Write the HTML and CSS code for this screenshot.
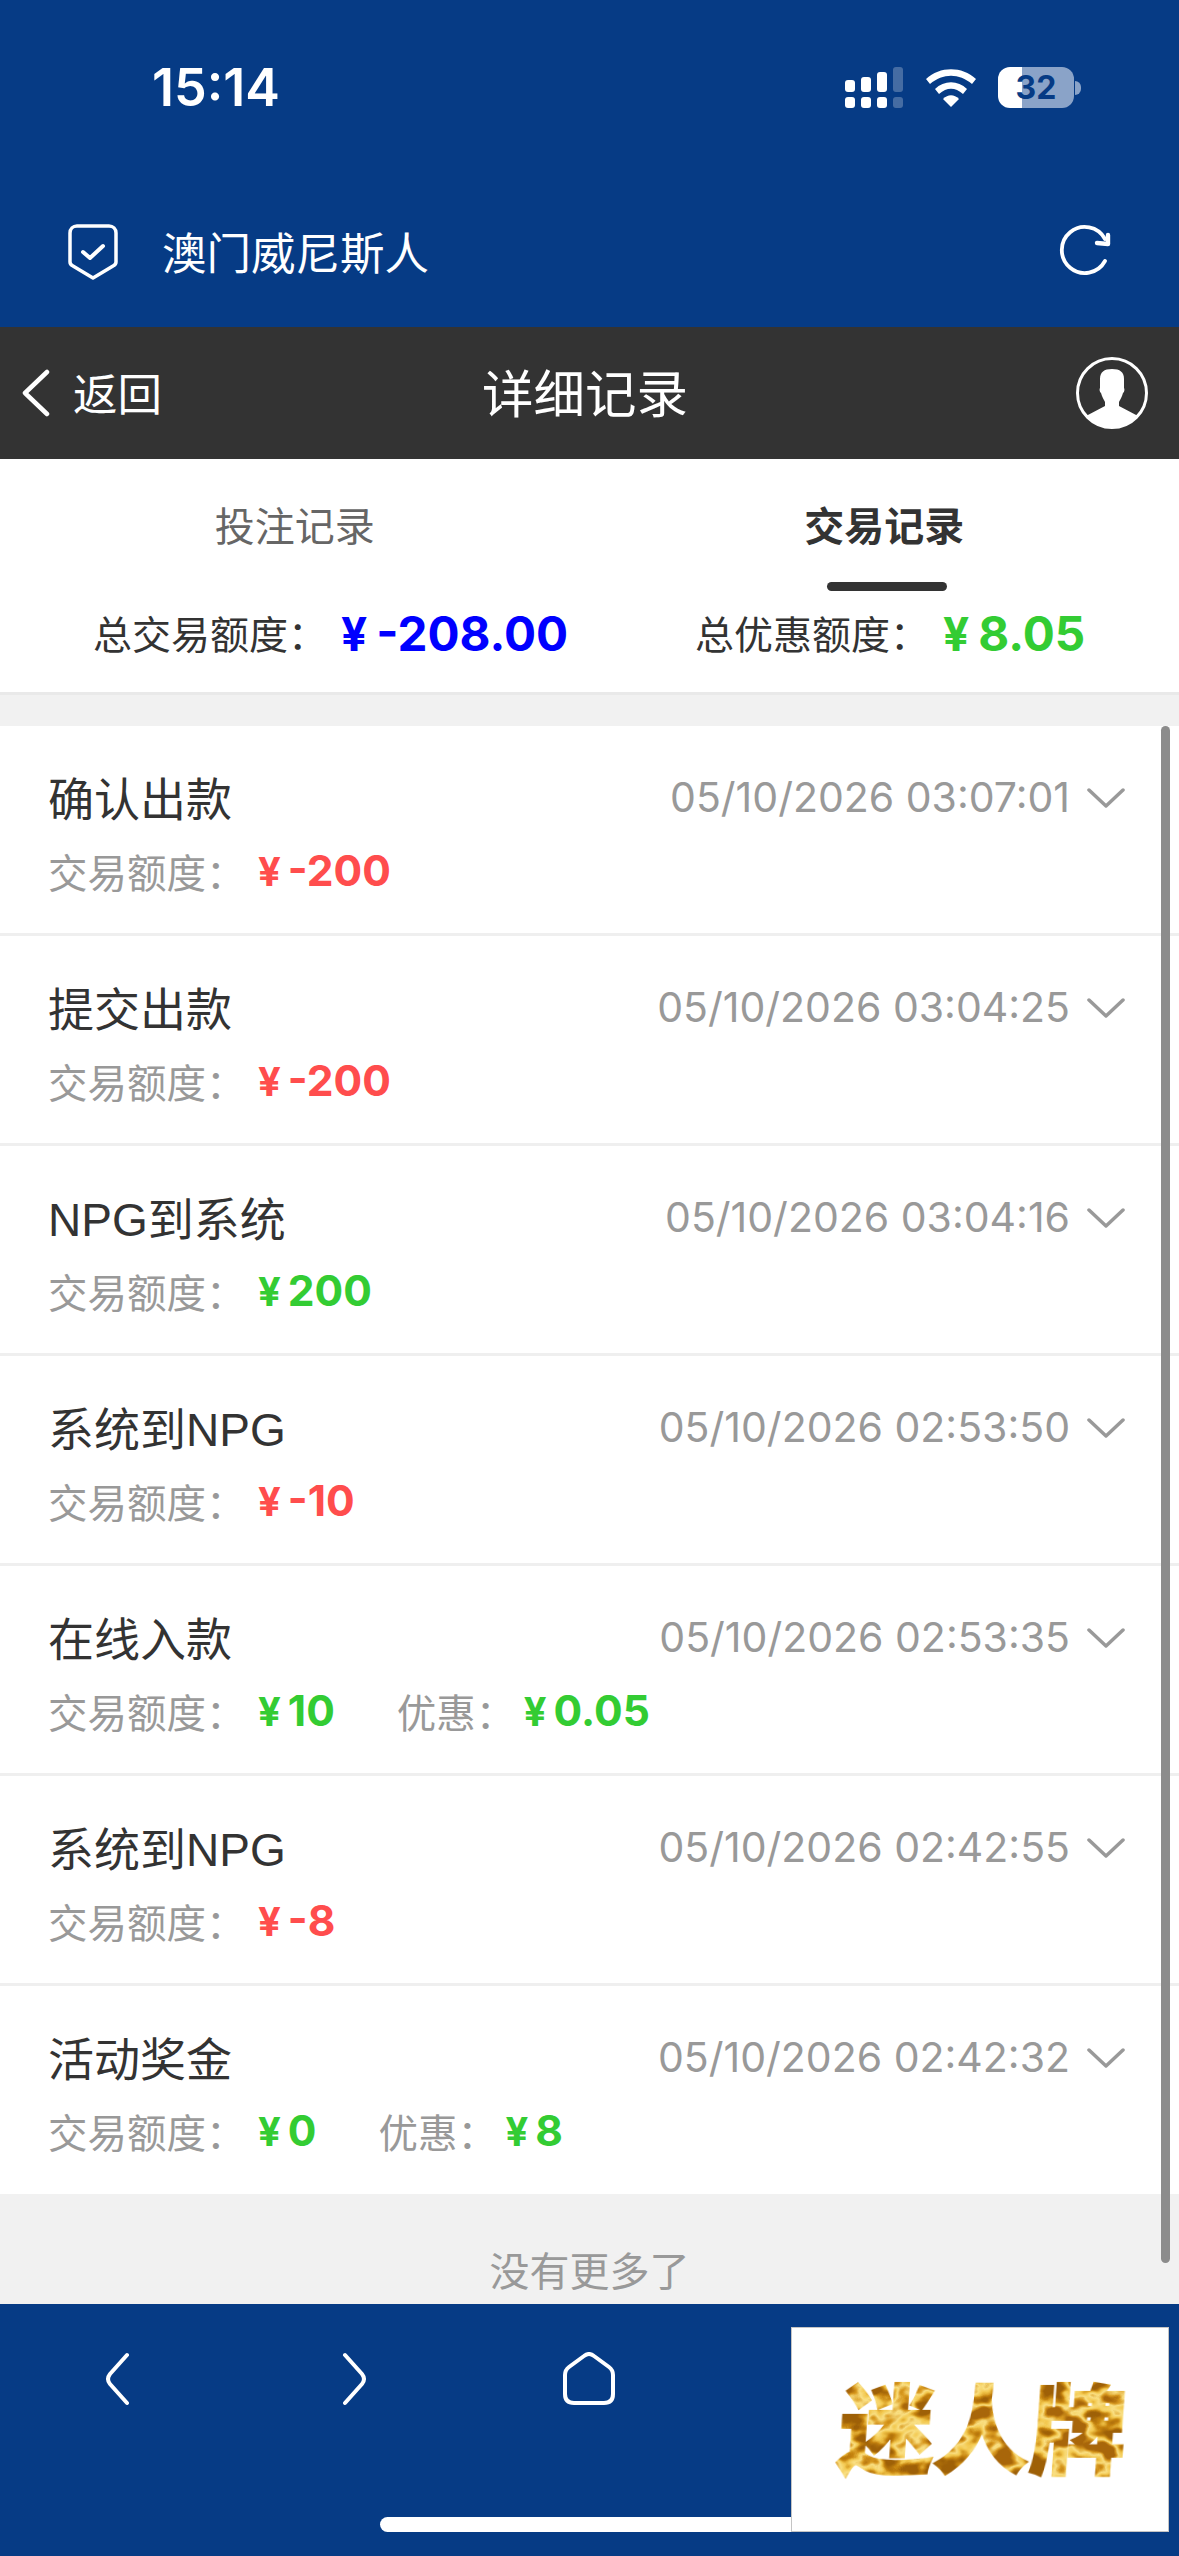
FILE: index.html
```html
<!DOCTYPE html>
<html lang="zh-CN">
<head>
    <meta charset="UTF-8">
    <title>详细记录</title>
    <link rel="stylesheet" href="styles.css">
</head>
<body>
<div class="page">

    <header class="top">
        <div class="status">
            <span class="time">15:14</span>
            <div class="status-icons">
                <svg class="signal" width="58" height="41" viewBox="0 0 58 41">
                    <g fill="#fff">
                        <rect x="0" y="13" width="10" height="12" rx="3"/>
                        <rect x="16" y="10" width="10" height="15" rx="3"/>
                        <rect x="32" y="5" width="10" height="20" rx="3"/>
                        <rect x="0" y="30" width="10" height="11" rx="3"/>
                        <rect x="16" y="30" width="10" height="11" rx="3"/>
                        <rect x="32" y="30" width="10" height="11" rx="3"/>
                        <g opacity="0.25">
                            <rect x="48" y="0" width="10" height="25" rx="3"/>
                            <rect x="48" y="30" width="10" height="11" rx="3"/>
                        </g>
                    </g>
                </svg>
                <svg class="wifi" width="50" height="38" viewBox="0 0 50 38">
                    <path d="M0 10 C14 -3 36 -3 50 10 L46 15 C33 4 17 4 4 15 Z" fill="#fff"/>
                    <path d="M9 20 C18 11 32 11 41 20 L37 25 C29 18 21 18 13 25 Z" fill="#fff"/>
                    <path d="M17 30 C22 25 28 25 33 30 L25 38 Z" fill="#fff"/>
                </svg>
                <div class="battery">
                    <span class="battery-num">32</span>
                </div>
                <span class="battery-tip"></span>
            </div>
        </div>
        <div class="app-row">
            <div class="app-name">
                <svg width="50" height="56" viewBox="0 0 50 56" fill="none" stroke="#fff" stroke-width="3.5" stroke-linejoin="round" stroke-linecap="round">
                    <path d="M9 2 H41 C45 2 48 5 48 9 V38 C48 40 47 41 45 42 L25 54 L5 42 C3 41 2 40 2 38 V9 C2 5 5 2 9 2 Z"/>
                    <path d="M15 28 L22 34 L35 22" stroke-width="4"/>
                </svg>
                <span class="app-title">澳门威尼斯人</span>
            </div>
            <svg class="refresh" width="56" height="56" viewBox="0 0 56 56" fill="none" stroke="#fff" stroke-width="3.8" stroke-linecap="round" stroke-linejoin="round">
                <path d="M49 36 A23 23 0 1 1 49 14"/>
                <path d="M52 10 L52 19 L41 18" stroke-width="4.4"/>
            </svg>
        </div>
    </header>

    <nav class="nav">
        <div class="nav-back">
            <svg width="28" height="48" viewBox="0 0 28 48" fill="none" stroke="#fff" stroke-width="4.5" stroke-linecap="round" stroke-linejoin="round">
                <path d="M25 3 L3 24 L25 45"/>
            </svg>
            <span>返回</span>
        </div>
        <div class="nav-title">详细记录</div>
        <svg class="nav-user" width="72" height="72" viewBox="0 0 72 72">
            <circle cx="36" cy="36" r="34.5" fill="none" stroke="#fff" stroke-width="3"/>
            <clipPath id="clip"><circle cx="36" cy="36" r="35"/></clipPath>
            <path clip-path="url(#clip)" fill="#fff" d="M36 12 C44 12 48 15 48 22 L48 31 C49 33 48 35 47 36 C46 40 44 43 43 45 L43 49 L62 59 L62 72 H10 L10 59 L29 49 L29 45 C28 43 26 40 25 36 C24 35 23 33 24 31 L24 22 C24 15 28 12 36 12 Z"/>
        </svg>
    </nav>

    <section class="summary">
        <div class="tabs">
            <div class="tab">投注记录</div>
            <div class="tab tab-active">交易记录</div>
        </div>
        <div class="totals">
            <div class="total total-left">
                <span class="total-label">总交易额度：</span>
                <span class="total-num blue"><i>¥</i>-208.00</span>
            </div>
            <div class="total total-right">
                <span class="total-label">总优惠额度：</span>
                <span class="total-num green"><i>¥</i>8.05</span>
            </div>
        </div>
    </section>

    <main class="list">
        <div class="row">
            <div class="row-top">
                <span class="row-title">确认出款</span>
                <span class="row-date">05/10/2026 03:07:01</span>
                <svg class="chev" width="38" height="20" viewBox="0 0 38 20"><path d="M2 2 L19 18 L36 2"/></svg>
            </div>
            <div class="row-sub">
                <span class="sub-label">交易额度：</span><span class="sub-num red"><i>¥</i>-200</span>
            </div>
        </div>
        <div class="row">
            <div class="row-top">
                <span class="row-title">提交出款</span>
                <span class="row-date">05/10/2026 03:04:25</span>
                <svg class="chev" width="38" height="20" viewBox="0 0 38 20"><path d="M2 2 L19 18 L36 2"/></svg>
            </div>
            <div class="row-sub">
                <span class="sub-label">交易额度：</span><span class="sub-num red"><i>¥</i>-200</span>
            </div>
        </div>
        <div class="row">
            <div class="row-top">
                <span class="row-title">NPG到系统</span>
                <span class="row-date">05/10/2026 03:04:16</span>
                <svg class="chev" width="38" height="20" viewBox="0 0 38 20"><path d="M2 2 L19 18 L36 2"/></svg>
            </div>
            <div class="row-sub">
                <span class="sub-label">交易额度：</span><span class="sub-num green"><i>¥</i>200</span>
            </div>
        </div>
        <div class="row">
            <div class="row-top">
                <span class="row-title">系统到NPG</span>
                <span class="row-date">05/10/2026 02:53:50</span>
                <svg class="chev" width="38" height="20" viewBox="0 0 38 20"><path d="M2 2 L19 18 L36 2"/></svg>
            </div>
            <div class="row-sub">
                <span class="sub-label">交易额度：</span><span class="sub-num red"><i>¥</i>-10</span>
            </div>
        </div>
        <div class="row">
            <div class="row-top">
                <span class="row-title">在线入款</span>
                <span class="row-date">05/10/2026 02:53:35</span>
                <svg class="chev" width="38" height="20" viewBox="0 0 38 20"><path d="M2 2 L19 18 L36 2"/></svg>
            </div>
            <div class="row-sub">
                <span class="sub-label">交易额度：</span><span class="sub-num green"><i>¥</i>10</span>
                <span class="sub-label sub-gap">优惠：</span><span class="sub-num green"><i>¥</i>0.05</span>
            </div>
        </div>
        <div class="row">
            <div class="row-top">
                <span class="row-title">系统到NPG</span>
                <span class="row-date">05/10/2026 02:42:55</span>
                <svg class="chev" width="38" height="20" viewBox="0 0 38 20"><path d="M2 2 L19 18 L36 2"/></svg>
            </div>
            <div class="row-sub">
                <span class="sub-label">交易额度：</span><span class="sub-num red"><i>¥</i>-8</span>
            </div>
        </div>
        <div class="row row-last">
            <div class="row-top">
                <span class="row-title">活动奖金</span>
                <span class="row-date">05/10/2026 02:42:32</span>
                <svg class="chev" width="38" height="20" viewBox="0 0 38 20"><path d="M2 2 L19 18 L36 2"/></svg>
            </div>
            <div class="row-sub">
                <span class="sub-label">交易额度：</span><span class="sub-num green"><i>¥</i>0</span>
                <span class="sub-label sub-gap">优惠：</span><span class="sub-num green"><i>¥</i>8</span>
            </div>
        </div>
        <div class="no-more">没有更多了</div>
        <div class="scrollbar"></div>
    </main>

    <footer class="bottom">
        <svg class="foot-back" width="26" height="54" viewBox="0 0 26 54" fill="none" stroke="#fff" stroke-width="4" stroke-linecap="round" stroke-linejoin="round">
            <path d="M23 3 L6 22 Q2 27 6 32 L23 51"/>
        </svg>
        <svg class="foot-next" width="26" height="54" viewBox="0 0 26 54" fill="none" stroke="#fff" stroke-width="4" stroke-linecap="round" stroke-linejoin="round">
            <path d="M3 3 L20 22 Q24 27 20 32 L3 51"/>
        </svg>
        <svg class="foot-home" width="52" height="54" viewBox="0 0 52 54" fill="none" stroke="#fff" stroke-width="4" stroke-linejoin="round">
            <path d="M21 4 Q26 0 31 4 L46 15 Q50 18 50 23 V42 Q50 51 41 51 H11 Q2 51 2 42 V23 Q2 18 6 15 Z"/>
        </svg>
        <div class="home-bar"></div>
        <div class="brand">
            <svg width="340" height="150" viewBox="0 0 340 150">
                <filter id="gold" x="-5%" y="-5%" width="110%" height="110%" color-interpolation-filters="sRGB">
                    <feTurbulence type="fractalNoise" baseFrequency="0.028 0.04" numOctaves="3" seed="7"/>
                    <feColorMatrix type="matrix" values="3 0 0 0 -1 3 0 0 0 -1 3 0 0 0 -1 0 0 0 0 1"/>
                    <feComponentTransfer>
                        <feFuncR type="table" tableValues="0.62 0.78 0.95 0.98 0.85 0.66"/>
                        <feFuncG type="table" tableValues="0.38 0.52 0.78 0.88 0.6 0.4"/>
                        <feFuncB type="table" tableValues="0.03 0.06 0.3 0.52 0.12 0.04"/>
                    </feComponentTransfer>
                    <feComposite in2="SourceAlpha" operator="in"/>
                </filter>
                <text class="brand-text" x="34" y="111" transform="skewX(-4)" filter="url(#gold)">迷人牌</text>
            </svg>
        </div>
    </footer>

</div>
</body>
</html>
```

FILE: styles.css
```css
* {
    box-sizing: border-box;
}

html, body {
    margin: 0;
    padding: 0;
}

body {
    font-family: "Noto Sans CJK SC", "Noto Sans", sans-serif;
    background-color: #F1F1F1;
    color: #333333;
}

i {
    font-style: normal;
}

.page {
    width: 1179px;
    height: 2556px;
    display: flex;
    flex-direction: column;
    overflow: hidden;
}

/* blue area */
.top {
    height: 327px;
    background-color: #063B85;
    color: #FFFFFF;
}

.status {
    height: 222px;
    padding: 67px 98px 0 152px;
    display: flex;
    justify-content: space-between;
    align-items: flex-start;
}

.time {
    font-family: "Inter", sans-serif;
    font-weight: 600;
    font-size: 52px;
    line-height: 41px;
}

.status-icons {
    display: flex;
    align-items: center;
    height: 41px;
}

.signal {
    margin-right: 23px;
}

.wifi {
    margin-right: 22px;
}

.battery {
    width: 76px;
    height: 41px;
    border-radius: 12px;
    background: linear-gradient(to right, #FFFFFF 0, #FFFFFF 24px, #8AA3C8 24px);
    display: flex;
    align-items: center;
    justify-content: center;
}

.battery-num {
    font-family: "Inter", sans-serif;
    font-weight: 700;
    font-size: 32px;
    line-height: 41px;
    color: #063B85;
}

.battery-tip {
    width: 6px;
    height: 14px;
    margin-left: 1px;
    background-color: #8AA3C8;
    border-radius: 0 7px 7px 0;
}

.app-row {
    height: 60px;
    padding: 0 67px 0 68px;
    display: flex;
    justify-content: space-between;
    align-items: center;
}

.app-name {
    display: flex;
    align-items: center;
    gap: 45px;
    font-size: 44.5px;
}

.app-title {
    margin-top: -3px;
    margin-left: -1px;
}

.refresh {
    margin-top: 2px;
}

/* dark title bar */
.nav {
    height: 132px;
    background-color: #333333;
    color: #FFFFFF;
    display: grid;
    grid-template-columns: 1fr auto 1fr;
    align-items: center;
    padding: 0 31px 0 22px;
}

.nav-back {
    display: flex;
    align-items: center;
    gap: 23px;
    font-size: 44.5px;
    line-height: 60px;
    margin-top: -3px;
}

.nav-back svg {
    margin-top: 3px;
}

.nav-title {
    font-size: 51.5px;
    margin-top: -6px;
}

.nav-user {
    justify-self: end;
}

/* tabs and totals */
.summary {
    height: 236px;
    background-color: #FFFFFF;
    border-bottom: 3px solid #E9E9E9;
}

.tabs {
    display: grid;
    grid-template-columns: 1fr 1fr;
    height: 132px;
    text-align: center;
}

.tab {
    font-size: 40px;
    line-height: 130px;
    color: #666666;
    position: relative;
}

.tab-active {
    color: #333333;
    font-weight: 700;
}

.tab-active::after {
    content: "";
    position: absolute;
    left: 237px;
    top: 123px;
    width: 120px;
    height: 9px;
    border-radius: 5px;
    background-color: #333333;
}

.totals {
    display: flex;
    height: 70px;
    padding: 12px 0 0 93px;
    align-items: center;
}

.total {
    display: flex;
    align-items: center;
}

.total-left {
    width: 602px;
}

.total-label {
    font-size: 39px;
    line-height: 58px;
    width: 248px;
    white-space: nowrap;
}

.total-num {
    font-family: "Inter", sans-serif;
    font-weight: 700;
    font-size: 47.6px;
    line-height: 58px;
    margin-top: 3px;
}

.total-num i {
    margin-right: 9px;
    font-size: 46px;
}

.blue {
    color: #0000FF;
}

.green {
    color: #33CC33;
}

.red {
    color: #FF4D4D;
}

/* records */
.list {
    flex: 1;
    position: relative;
    padding-top: 31px;
    background-color: #F1F1F1;
}

.row {
    height: 210px;
    padding: 35px 54px 0 48px;
    background-color: #FFFFFF;
    border-bottom: 3px solid #EFEFEF;
}

.row-last {
    border-bottom: none;
    height: 208px;
}

.row-top {
    display: flex;
    align-items: center;
    height: 70px;
}

.row-title {
    flex: 1;
    font-family: "Liberation Sans", "Noto Sans CJK SC", sans-serif;
    font-size: 46px;
    color: #333333;
}

.row-date {
    font-family: "Inter", "Liberation Sans", sans-serif;
    font-size: 41px;
    color: #999999;
    margin: 2px 17px 0 0;
}

.chev {
    fill: none;
    stroke: #999999;
    stroke-width: 3.5;
    stroke-linecap: round;
    stroke-linejoin: round;
    margin-top: 4px;
}

.row-sub {
    display: flex;
    align-items: center;
    height: 56px;
    margin-top: 11px;
}

.sub-label {
    font-size: 39.5px;
    color: #999999;
    width: 210px;
    white-space: nowrap;
}

.sub-gap {
    margin-left: 62px;
    width: 127px;
}

.sub-num {
    font-family: "Inter", sans-serif;
    font-weight: 700;
    font-size: 42.5px;
}

.sub-num i {
    font-size: 40px;
    margin-right: 7px;
}

.no-more {
    text-align: center;
    font-size: 40px;
    line-height: 56px;
    color: #999999;
    margin-top: 47px;
}

.scrollbar {
    position: absolute;
    top: 31px;
    right: 9px;
    width: 9px;
    height: 1537px;
    border-radius: 5px;
    background-color: #8C8C8C;
}

/* bottom bar */
.bottom {
    height: 252px;
    background-color: #063B85;
    position: relative;
    display: flex;
    align-items: flex-start;
    padding: 48px 0 0 104px;
}

.foot-next {
    margin-left: 212px;
}

.foot-home {
    margin-left: 195px;
}

.home-bar {
    position: absolute;
    left: 380px;
    top: 213px;
    width: 430px;
    height: 15px;
    border-radius: 8px 0 0 8px;
    background-color: #FFFFFF;
}

.brand {
    position: absolute;
    left: 791px;
    top: 23px;
    width: 378px;
    height: 205px;
    background-color: #FFFFFF;
    border: 1px solid #C4C4C4;
    display: flex;
    align-items: center;
    justify-content: center;
}

.brand-text {
    font-family: "Noto Sans CJK SC", sans-serif;
    font-weight: 900;
    font-size: 96px;
    stroke: #000000;
    stroke-width: 2px;
}
```
